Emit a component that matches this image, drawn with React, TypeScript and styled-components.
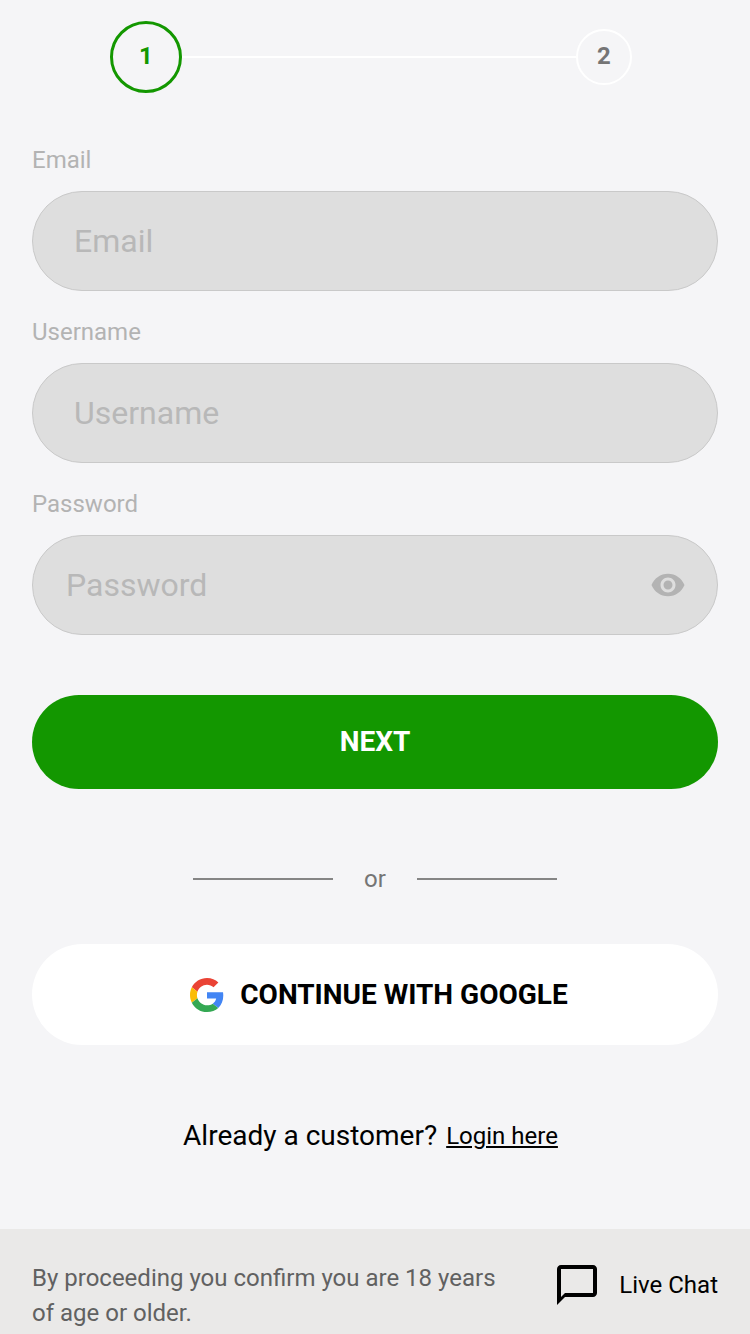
import React from 'react';
import styled, { createGlobalStyle, css } from 'styled-components';
import { MdChatBubbleOutline, MdVisibility } from 'react-icons/md';

const GlobalStyle = createGlobalStyle`
  *, *::before, *::after { box-sizing: border-box; }
  body {
    margin: 0;
    background: #f5f5f7;
    color: #000;
    font-family: Roboto, "Liberation Sans", sans-serif;
  }
`;

const Page = styled.div`
  display: flex;
  flex-direction: column;
  min-height: 100vh;
`;

const Content = styled.main`
  display: flex;
  flex-direction: column;
  flex: 1;
  padding: 21px 32px 74px;
`;

const Stepper = styled.ol`
  display: flex;
  align-items: center;
  width: 100%;
  max-width: 530px;
  margin: 0 auto;
  padding: 0 8px 0 0;
  list-style: none;
`;

const Step = styled.li<{ $active?: boolean }>`
  display: flex;
  align-items: center;
  justify-content: center;
  flex: none;
  width: 56px;
  height: 56px;
  padding-bottom: 2px;
  border: 2px solid #fff;
  border-radius: 50%;
  color: #757575;
  font-size: 24px;
  font-weight: 700;
  line-height: 28px;
  ${({ $active }) =>
    $active &&
    css`
      width: 72px;
      height: 72px;
      border: 3px solid #139700;
      color: #139700;
    `}
`;

const StepLine = styled.li`
  flex: 1;
  height: 2px;
  background: #fff;
`;

const Form = styled.form`
  display: flex;
  flex-direction: column;
  gap: 27px;
  margin-top: 53px;
`;

const Field = styled.div`
  display: flex;
  flex-direction: column;
  gap: 17px;
`;

const Label = styled.label`
  color: #b3b3b3;
  font-size: 24px;
  line-height: 28px;
`;

const InputShell = styled.div<{ $inset: number }>`
  display: flex;
  align-items: center;
  height: 100px;
  padding: 0 31px 0 ${({ $inset }) => $inset}px;
  border: 1px solid #c9c9c9;
  border-radius: 50px;
  background: #dedede;
`;

const Input = styled.input`
  flex: 1;
  min-width: 0;
  height: 100%;
  padding: 0;
  border: 0;
  outline: 0;
  background: transparent;
  color: #333;
  font: 32px Roboto, "Liberation Sans", sans-serif;
  &::placeholder {
    color: #b8b8b8;
    opacity: 1;
  }
`;

const IconButton = styled.button`
  display: flex;
  padding: 0;
  border: 0;
  background: none;
  color: #b3b3b3;
  cursor: pointer;
`;

const Button = styled.button`
  display: flex;
  align-items: center;
  justify-content: center;
  width: 100%;
  border: 0;
  border-radius: 51px;
  font: 700 28px/32px Roboto, "Liberation Sans", sans-serif;
  cursor: pointer;
`;

const NextButton = styled(Button)`
  height: 94px;
  margin-top: 33px;
  padding: 0 32px;
  background: #139700;
  color: #fff;
`;

const GoogleButton = styled(Button)`
  gap: 16px;
  height: 101px;
  padding: 0 32px 0 40px;
  background: #fff;
  color: #000;
`;

const Divider = styled.div`
  display: flex;
  align-items: center;
  justify-content: center;
  gap: 31px;
  margin: 76px 0 51px;
  color: #757575;
  font-size: 24px;
  line-height: 28px;
  &::before, &::after {
    content: "";
    width: 140px;
    height: 2px;
    background: #858585;
  }
`;

const Login = styled.p`
  display: flex;
  align-items: center;
  justify-content: center;
  gap: 9px;
  margin: 75px 9px 0 0;
  font-size: 28px;
  line-height: 32px;
`;

const LoginLink = styled.a`
  color: #000;
  font-size: 24px;
`;

const Footer = styled.footer`
  display: flex;
  align-items: flex-start;
  justify-content: space-between;
  gap: 32px;
  padding: 32px 32px 3px;
  background: #eae9e8;
`;

const Notice = styled.p`
  flex: 1;
  max-width: 480px;
  margin: 0;
  color: #616161;
  font-size: 24px;
  line-height: 35px;
`;

const ChatButton = styled.button`
  display: flex;
  align-items: center;
  gap: 18px;
  padding: 0;
  border: 0;
  background: none;
  color: #000;
  font: 24px/28px Roboto, "Liberation Sans", sans-serif;
  cursor: pointer;
`;

const GoogleLogo = () => (
  <svg width="34" height="34" viewBox="0 0 48 48" aria-hidden="true">
    <path fill="#EA4335" d="M24 9.5c3.54 0 6.71 1.22 9.21 3.6l6.85-6.85C35.9 2.38 30.47 0 24 0 14.62 0 6.51 5.38 2.56 13.22l7.98 6.19C12.43 13.72 17.74 9.5 24 9.5z" />
    <path fill="#4285F4" d="M46.98 24.55c0-1.57-.15-3.09-.38-4.55H24v9.02h12.94c-.58 2.96-2.26 5.48-4.78 7.18l7.73 6c4.51-4.18 7.09-10.36 7.09-17.65z" />
    <path fill="#FBBC05" d="M10.53 28.59c-.48-1.45-.76-2.99-.76-4.59s.27-3.14.76-4.59l-7.98-6.19C.92 16.46 0 20.12 0 24c0 3.88.92 7.54 2.56 10.78l7.97-6.19z" />
    <path fill="#34A853" d="M24 48c6.48 0 11.93-2.13 15.89-5.81l-7.73-6c-2.15 1.45-4.92 2.3-8.16 2.3-6.26 0-11.57-4.22-13.47-9.91l-7.98 6.19C6.51 42.62 14.62 48 24 48z" />
  </svg>
);

export default function App() {
  const [showPassword, setShowPassword] = React.useState(false);
  return (
    <>
      <GlobalStyle />
      <Page>
        <Content>
          <Stepper>
            <Step $active aria-current="step">1</Step>
            <StepLine aria-hidden="true" />
            <Step>2</Step>
          </Stepper>
          <Form onSubmit={(event) => event.preventDefault()}>
            <Field>
              <Label htmlFor="email">Email</Label>
              <InputShell $inset={41}>
                <Input id="email" type="email" placeholder="Email" />
              </InputShell>
            </Field>
            <Field>
              <Label htmlFor="username">Username</Label>
              <InputShell $inset={41}>
                <Input id="username" type="text" placeholder="Username" />
              </InputShell>
            </Field>
            <Field>
              <Label htmlFor="password">Password</Label>
              <InputShell $inset={33}>
                <Input
                  id="password"
                  type={showPassword ? 'text' : 'password'}
                  placeholder="Password"
                />
                <IconButton
                  type="button"
                  aria-label="Show password"
                  aria-pressed={showPassword}
                  onClick={() => setShowPassword(!showPassword)}
                >
                  <MdVisibility size={36} />
                </IconButton>
              </InputShell>
            </Field>
            <NextButton type="submit">NEXT</NextButton>
          </Form>
          <Divider>or</Divider>
          <GoogleButton type="button">
            <GoogleLogo />
            CONTINUE WITH GOOGLE
          </GoogleButton>
          <Login>
            Already a customer?
            <LoginLink href="#login">Login here</LoginLink>
          </Login>
        </Content>
        <Footer>
          <Notice>By proceeding you confirm you are 18 years of age or older.</Notice>
          <ChatButton type="button">
            <MdChatBubbleOutline size={48} />
            Live Chat
          </ChatButton>
        </Footer>
      </Page>
    </>
  );
}
